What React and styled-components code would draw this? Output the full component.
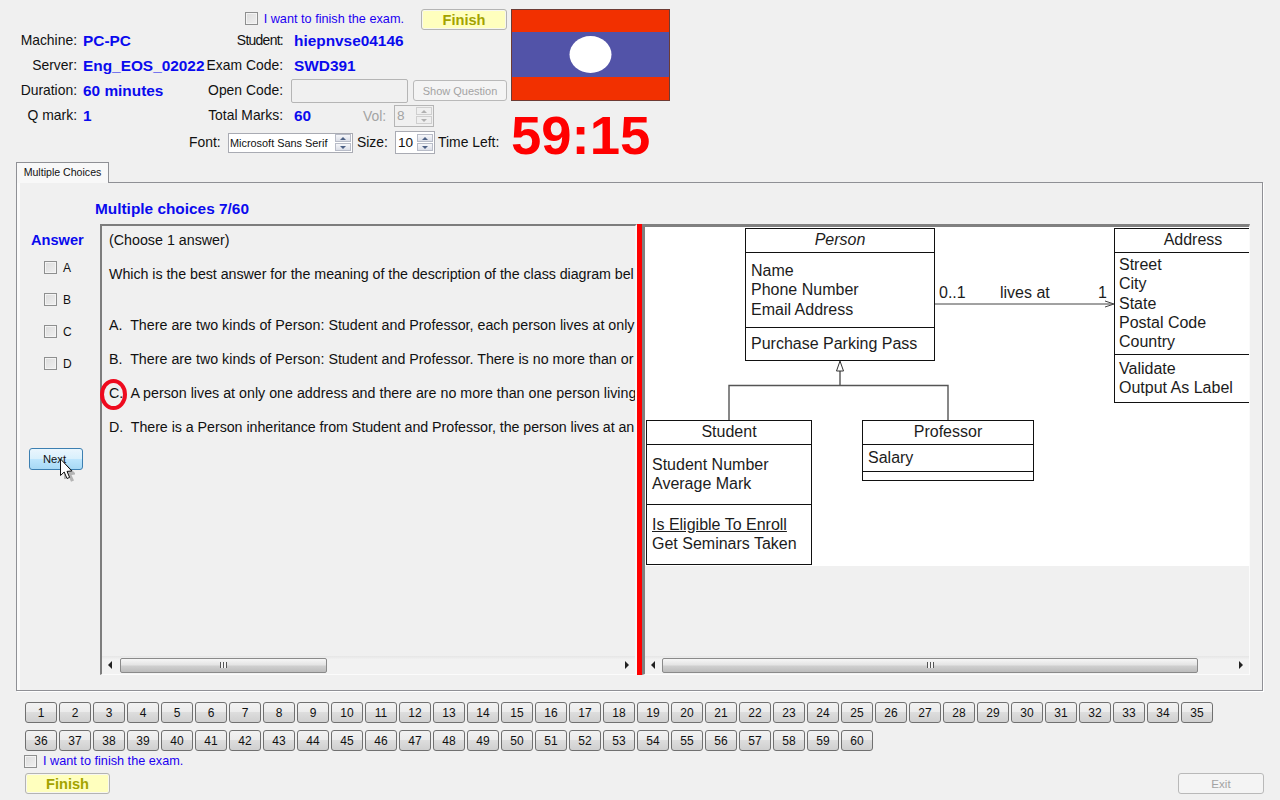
import styled, { createGlobalStyle } from "styled-components";

const GlobalStyle = createGlobalStyle`
    html, body {
        margin: 0;
        padding: 0;
        background: #f0f0f0;
    }
    body {
        font-family: "Liberation Sans", Arial, sans-serif;
        color: #111;
    }
`;

const row1 = Array.from({ length: 35 }, (_, i) => i + 1);
const row2 = Array.from({ length: 25 }, (_, i) => i + 36);

const answers = ["A", "B", "C", "D"];

export default function App() {
    return (
        <Page>
            <GlobalStyle />
            <Header>
                <InfoGrid>
                    <FinishRow>
                        <CheckLine>
                            <Check type="checkbox" />
                            <BlueLabel>I want to finish the exam.</BlueLabel>
                        </CheckLine>
                        <FinishButton $w={86}>Finish</FinishButton>
                    </FinishRow>

                    <FieldLabel>Machine:</FieldLabel>
                    <Value>PC-PC</Value>
                    <FieldLabel $wide $tight>Student:</FieldLabel>
                    <Value $indent>hiepnvse04146</Value>

                    <FieldLabel>Server:</FieldLabel>
                    <Value>Eng_EOS_02022</Value>
                    <FieldLabel $wide>Exam Code:</FieldLabel>
                    <Value $indent>SWD391</Value>

                    <FieldLabel>Duration:</FieldLabel>
                    <Value>60 minutes</Value>
                    <FieldLabel $wide>Open Code:</FieldLabel>
                    <Cell>
                        <CodeInput disabled />
                        <ShowButton>Show Question</ShowButton>
                    </Cell>

                    <FieldLabel>Q mark:</FieldLabel>
                    <Value>1</Value>
                    <FieldLabel $wide>Total Marks:</FieldLabel>
                    <Cell>
                        <MarksValue>60</MarksValue>
                        <VolLabel>Vol:</VolLabel>
                        <Spin $w={40} $h={22} $disabled>
                            <SpinText>8</SpinText>
                            <SpinArrows $disabled />
                        </Spin>
                    </Cell>

                    <FontRow>
                        <RowLabel $w={39}>Font:</RowLabel>
                        <Spin $w={125} $h={20}>
                            <FontName>Microsoft Sans Serif</FontName>
                            <SpinArrows />
                        </Spin>
                        <RowLabel $w={38} $ml={4}>Size:</RowLabel>
                        <Spin $w={40} $h={23}>
                            <SpinText>10</SpinText>
                            <SpinArrows />
                        </Spin>
                        <RowLabel $ml={3}>Time Left:</RowLabel>
                    </FontRow>
                </InfoGrid>

                <FlagColumn>
                    <Flag viewBox="0 0 159 92">
                        <rect width="159" height="92" fill="#f23000" />
                        <rect y="23" width="159" height="45" fill="#5253a8" />
                        <ellipse cx="79.5" cy="45.5" rx="21" ry="18.5" fill="#fff" />
                        <rect x=".5" y=".5" width="158" height="91" fill="none" stroke="#6d3b34" />
                    </Flag>
                    <Timer>59:15</Timer>
                </FlagColumn>
            </Header>

            <TabStrip>
                <Tab>Multiple Choices</Tab>
            </TabStrip>

            <TabPanel>
                <PanelTitle>Multiple choices 7/60</PanelTitle>
                <Workspace>
                    <Sidebar>
                        <AnswerTitle>Answer</AnswerTitle>
                        <AnswerList>
                            {answers.map((a) => (
                                <AnswerRow key={a}>
                                    <Check type="checkbox" />
                                    <AnswerLetter>{a}</AnswerLetter>
                                </AnswerRow>
                            ))}
                        </AnswerList>
                        <NextButton>
                            Next
                            <Cursor viewBox="0 0 18 24">
                                <path d="M3.5 3 L14.5 14 L14.5 15.5 L11 16 L13.5 21.5 L10.5 22.8 L8 17 L5 20 L3.5 20 Z" fill="#000" opacity=".25" transform="translate(1.5 1)" />
                                <path d="M1.5 1 L1.5 17.5 L5.2 14 L8 20.5 L10.6 19.4 L8 13.4 L12.8 13 Z" fill="#fff" stroke="#111" strokeWidth="1" strokeLinejoin="round" />
                            </Cursor>
                        </NextButton>
                    </Sidebar>

                    <QuestionPane>
                        <QuestionText>
                            <Line>(Choose 1 answer)</Line>
                            <Line $fit>Which is the best answer for the meaning of the description of the class diagram bel</Line>
                            <OptionList>
                                <Line>{"A.  There are two kinds of Person: Student and Professor, each person lives at only"}</Line>
                                <Line>{"B.  There are two kinds of Person: Student and Professor. There is no more than or"}</Line>
                                <Line>{"C.  A person lives at only one address and there are no more than one person living"}</Line>
                                <Line $fit>{"D.  There is a Person inheritance from Student and Professor, the person lives at an"}</Line>
                            </OptionList>
                        </QuestionText>
                        <AnswerMark />
                        <ScrollBar $thumbStart={1} $thumbWidth={207} />
                    </QuestionPane>

                    <Splitter />

                    <DiagramPane>
                        <DiagramViewport>
                            <Diagram>
                                <Connectors viewBox="0 0 604 339">
                                    <path d="M290 77 H468 M460 74 L469 77 L460 80" fill="none" stroke="#444" />
                                    <path d="M195 144 V158 M84 193 V158.5 H303 V193" fill="none" stroke="#555" strokeWidth="1.4" />
                                    <path d="M195 134 L191.5 144 H198.5 Z" fill="#fff" stroke="#333" />
                                </Connectors>

                                <AssocLabel $x={294}>0..1</AssocLabel>
                                <AssocLabel $x={355}>lives at</AssocLabel>
                                <AssocLabel $x={453}>1</AssocLabel>

                                <UmlBox $x={100} $y={1} $w={190}>
                                    <UmlTitle $italic>Person</UmlTitle>
                                    <UmlSection $h={75} $pt={8}>
                                        <div>Name</div>
                                        <div>Phone Number</div>
                                        <div>Email Address</div>
                                    </UmlSection>
                                    <UmlSection $h={32} $pt={6} $last>
                                        <div>Purchase Parking Pass</div>
                                    </UmlSection>
                                </UmlBox>

                                <UmlBox $x={469} $y={1} $w={190}>
                                    <UmlTitle $offset={32}>Address</UmlTitle>
                                    <UmlSection $h={102} $pt={2} $pl={4}>
                                        <div>Street</div>
                                        <div>City</div>
                                        <div>State</div>
                                        <div>Postal Code</div>
                                        <div>Country</div>
                                    </UmlSection>
                                    <UmlSection $h={47} $pt={4} $pl={4} $last>
                                        <div>Validate</div>
                                        <div>Output As Label</div>
                                    </UmlSection>
                                </UmlBox>

                                <UmlBox $x={1} $y={193} $w={166}>
                                    <UmlTitle>Student</UmlTitle>
                                    <UmlSection $h={60} $pt={10}>
                                        <div>Student Number</div>
                                        <div>Average Mark</div>
                                    </UmlSection>
                                    <UmlSection $h={59} $pt={10} $last>
                                        <u>Is Eligible To Enroll</u>
                                        <div>Get Seminars Taken</div>
                                    </UmlSection>
                                </UmlBox>

                                <UmlBox $x={217} $y={193} $w={172}>
                                    <UmlTitle>Professor</UmlTitle>
                                    <UmlSection $h={27} $pt={3}>
                                        <div>Salary</div>
                                    </UmlSection>
                                    <UmlSection $h={8} $last />
                                </UmlBox>
                            </Diagram>
                        </DiagramViewport>
                        <ScrollBar $thumbStart={0} $thumbWidth={536} />
                    </DiagramPane>
                </Workspace>
            </TabPanel>

            <Footer>
                <NumberGrid>
                    {row1.concat(row2).map((n) => (
                        <NumberButton key={n}>{n}</NumberButton>
                    ))}
                </NumberGrid>
                <FooterCheck>
                    <Check type="checkbox" />
                    <BlueLabel>I want to finish the exam.</BlueLabel>
                </FooterCheck>
                <FooterActions>
                    <FinishButton $w={85}>Finish</FinishButton>
                    <ExitButton>Exit</ExitButton>
                </FooterActions>
            </Footer>
        </Page>
    );
}

function ScrollBar({ $thumbStart, $thumbWidth }) {
    return (
        <ScrollTrack>
            <ScrollArrow />
            <ThumbArea>
                <Thumb $start={$thumbStart} $width={$thumbWidth}>
                    <Gripper />
                </Thumb>
            </ThumbArea>
            <ScrollArrow $right />
        </ScrollTrack>
    );
}

function SpinArrows({ $disabled }) {
    return (
        <SpinColumn>
            <SpinButton $disabled={$disabled}><SpinTriangle $disabled={$disabled} /></SpinButton>
            <SpinButton $disabled={$disabled}><SpinTriangle $down $disabled={$disabled} /></SpinButton>
        </SpinColumn>
    );
}

const Page = styled.div`
    width: 1280px;
    height: 800px;
    overflow: hidden;
    background: #f0f0f0;
`;

const Header = styled.header`
    display: flex;
    gap: 4px;
    height: 162px;
    padding-top: 9px;
    box-sizing: border-box;
`;

const InfoGrid = styled.div`
    display: grid;
    grid-template-columns: 83px 124px 84px 216px;
    grid-template-rows: 19px repeat(4, 25px) 29px;
    width: 507px;
    font-size: 13.9px;
`;

const FinishRow = styled.div`
    grid-column: 1 / -1;
    display: flex;
    justify-content: flex-end;
    align-items: flex-start;
    gap: 17px;
`;

const CheckLine = styled.label`
    display: flex;
    align-items: center;
    gap: 6px;
    height: 19px;
`;

const Check = styled.input`
    appearance: none;
    width: 13px;
    height: 13px;
    margin: 0;
    box-sizing: border-box;
    flex: none;
    border: 1px solid #8e8f8f;
    background: linear-gradient(135deg, #dcdcdc, #f0f0f0);
    box-shadow: inset 0 0 0 1px #f4f4f4;
`;

const BlueLabel = styled.span`
    font-size: 12.7px;
    color: #1c00f0;
    white-space: nowrap;
`;

const FinishButton = styled.button`
    width: ${(p) => p.$w}px;
    height: 21px;
    padding: 0;
    box-sizing: border-box;
    border: 1px solid #b4b4b4;
    border-radius: 3px;
    background: #ffffbe;
    box-shadow: inset 0 0 0 1px #f7f7f0;
    font-family: inherit;
    font-size: 14.6px;
    font-weight: 700;
    color: #a3a300;
`;

const FieldLabel = styled.div`
    display: flex;
    align-items: center;
    justify-content: flex-end;
    padding-right: ${(p) => (p.$wide ? 8 : 6)}px;
    padding-bottom: 1px;
    letter-spacing: ${(p) => (p.$tight ? "-0.7px" : "normal")};
    white-space: nowrap;
`;

const Value = styled.div`
    display: flex;
    align-items: center;
    padding-left: ${(p) => (p.$indent ? 3 : 0)}px;
    font-size: 15.4px;
    font-weight: 700;
    color: #0a0aee;
    white-space: nowrap;
`;

const Cell = styled.div`
    display: flex;
    align-items: center;
`;

const CodeInput = styled.input`
    width: 117px;
    height: 24px;
    box-sizing: border-box;
    border: 1px solid #b5b5b5;
    border-radius: 2px;
    background: #f0f0f0;
    margin: 0 5px 0 0;
`;

const DisabledButton = styled.button`
    box-sizing: border-box;
    padding: 0;
    border: 1px solid #b9b9b9;
    border-radius: 3px;
    background: #f4f4f4;
    font-family: inherit;
    color: #a3a3a3;
`;

const ShowButton = styled(DisabledButton)`
    width: 94px;
    height: 21px;
    font-size: 11px;
`;

const ExitButton = styled(DisabledButton)`
    width: 86px;
    height: 21px;
    font-size: 11.6px;
`;

const MarksValue = styled.span`
    width: 72px;
    padding-left: 3px;
    box-sizing: border-box;
    font-size: 15.4px;
    font-weight: 700;
    color: #0a0aee;
`;

const VolLabel = styled.span`
    width: 31px;
    color: #a3a3a3;
`;

const FontRow = styled.div`
    grid-column: 1 / -1;
    display: flex;
    align-items: center;
    padding-left: 189px;
`;

const RowLabel = styled.span`
    width: ${(p) => (p.$w ? `${p.$w}px` : "auto")};
    flex: none;
    margin-left: ${(p) => p.$ml || 0}px;
    margin-bottom: 2px;
    white-space: nowrap;
`;

const Spin = styled.div`
    display: flex;
    align-items: center;
    justify-content: space-between;
    width: ${(p) => p.$w}px;
    height: ${(p) => p.$h}px;
    box-sizing: border-box;
    flex: none;
    padding: 0 1px 0 1px;
    border: 1px solid ${(p) => (p.$disabled ? "#b5b5b5" : "#a9abb3")};
    background: ${(p) => (p.$disabled ? "#f0f0f0" : "#fff")};
    color: ${(p) => (p.$disabled ? "#a3a3a3" : "#111")};
`;

const SpinText = styled.span`
    font-size: 13.6px;
    padding-left: 1px;
`;

const FontName = styled.span`
    font-size: 10.9px;
    white-space: nowrap;
`;

const SpinColumn = styled.div`
    display: flex;
    flex-direction: column;
    gap: 1px;
`;

const SpinButton = styled.div`
    display: flex;
    align-items: center;
    justify-content: center;
    width: 14px;
    height: 6px;
    border: 1px solid ${(p) => (p.$disabled ? "#cfcfcf" : "#b8bcc8")};
    background: ${(p) => (p.$disabled ? "#efefef" : "linear-gradient(#f6f7fa, #dcdfe8)")};
`;

const SpinTriangle = styled.span`
    width: 0;
    height: 0;
    border-left: 3px solid transparent;
    border-right: 3px solid transparent;
    ${(p) => {
        const color = p.$disabled ? "#b0b0b0" : "#4d6185";
        return p.$down ? `border-top: 3px solid ${color};` : `border-bottom: 3px solid ${color};`;
    }}
`;

const FlagColumn = styled.div`
    display: flex;
    flex-direction: column;
    width: 159px;
`;

const Flag = styled.svg`
    display: block;
    flex: none;
    width: 159px;
    height: 92px;
`;

const Timer = styled.div`
    font-size: 54.5px;
    line-height: 50px;
    margin-top: 10px;
    font-weight: 700;
    color: #ff0000;
    white-space: nowrap;
`;

const TabStrip = styled.div`
    display: flex;
    height: 20px;
    padding-left: 16px;
`;

const Tab = styled.div`
    position: relative;
    z-index: 1;
    width: 93px;
    height: 21px;
    box-sizing: border-box;
    border: 1px solid #8f9095;
    border-bottom: none;
    background: #f8f8f8;
    font-size: 10.6px;
    line-height: 19px;
    text-align: center;
    white-space: nowrap;
`;

const TabPanel = styled.section`
    width: 1247px;
    height: 509px;
    margin-left: 16px;
    box-sizing: border-box;
    border: 1px solid #8f9095;
    background: #f0f0f0;
    padding-top: 17px;
    box-shadow: inset 3px 0 0 #fbfbfb, 1px 1px 0 #fff;
`;

const PanelTitle = styled.h2`
    margin: 0 0 6px 78px;
    font-size: 15.4px;
    line-height: 18px;
    font-weight: 700;
    color: #0a0aee;
`;

const Workspace = styled.div`
    display: flex;
    height: 451px;
`;

const Sidebar = styled.aside`
    display: flex;
    flex-direction: column;
    width: 83px;
    flex: none;
    padding-top: 7px;
    box-sizing: border-box;
`;

const AnswerTitle = styled.div`
    margin-left: 14px;
    font-size: 14.6px;
    line-height: 18px;
    font-weight: 700;
    color: #0a0aee;
`;

const AnswerList = styled.div`
    display: flex;
    flex-direction: column;
    gap: 19px;
    margin: 12px 0 0 27px;
`;

const AnswerRow = styled.label`
    display: flex;
    align-items: center;
    gap: 6px;
    height: 13px;
`;

const AnswerLetter = styled.span`
    font-size: 12px;
`;

const NextButton = styled.button`
    position: relative;
    width: 54px;
    height: 22px;
    margin: 78px 0 0 12px;
    padding: 0 3px 0 0;
    box-sizing: border-box;
    border: 1px solid #3c7fb1;
    border-radius: 3px;
    background: linear-gradient(#eaf6fd 0%, #d9f0fc 48%, #bee6fd 50%, #a7d9f5 100%);
    font-family: inherit;
    font-size: 11.2px;
    color: #111;
`;

const Cursor = styled.svg`
    position: absolute;
    left: 29px;
    top: 9px;
    width: 18px;
    height: 24px;
`;

const QuestionPane = styled.div`
    position: relative;
    display: flex;
    flex-direction: column;
    width: 537px;
    flex: none;
    box-sizing: border-box;
    border-top: 2px solid #7d7d7d;
    border-left: 2px solid #7d7d7d;
    border-right: 2px solid #f8f8f8;
    border-bottom: 1px solid #fbfbfb;
`;

const QuestionText = styled.div`
    flex: 1;
    overflow: hidden;
    padding: 6px 0 0 7px;
    font-size: 14.28px;
    line-height: 17px;
    white-space: pre;
`;

const Line = styled.div`
    height: 17px;
    margin-bottom: 17px;
    letter-spacing: ${(p) => (p.$fit ? "-0.05px" : "normal")};
`;

const OptionList = styled.div`
    margin-top: 34px;
`;

const AnswerMark = styled.div`
    position: absolute;
    left: -2px;
    top: 153px;
    width: 27px;
    height: 31px;
    box-sizing: border-box;
    border: 4px solid #ee0a1e;
    border-radius: 50%;
`;

const Splitter = styled.div`
    width: 5px;
    flex: none;
    background: #ff0000;
`;

const DiagramPane = styled.div`
    display: flex;
    flex-direction: column;
    width: 608px;
    flex: none;
    box-sizing: border-box;
    border-top: 3px solid #808080;
    border-left: 3px solid #808080;
    border-right: 1px solid #fbfbfb;
    border-bottom: 1px solid #fbfbfb;
`;

const DiagramViewport = styled.div`
    flex: 1;
    overflow: hidden;
`;

const Diagram = styled.div`
    position: relative;
    height: 339px;
    overflow: hidden;
    background: #fff;
    font-size: 16px;
    line-height: 19.3px;
    color: #1c1c1c;
`;

const Connectors = styled.svg`
    position: absolute;
    left: 0;
    top: 0;
    width: 604px;
    height: 339px;
`;

const AssocLabel = styled.span`
    position: absolute;
    left: ${(p) => p.$x}px;
    top: 56px;
`;

const UmlBox = styled.div`
    position: absolute;
    left: ${(p) => p.$x}px;
    top: ${(p) => p.$y}px;
    width: ${(p) => p.$w}px;
    box-sizing: border-box;
    border: 1px solid #111;
    background: #fff;
`;

const UmlTitle = styled.div`
    height: 24px;
    box-sizing: border-box;
    border-bottom: 1px solid #111;
    line-height: 22px;
    text-align: center;
    font-style: ${(p) => (p.$italic ? "italic" : "normal")};
    padding-right: ${(p) => p.$offset || 0}px;
`;

const UmlSection = styled.div`
    height: ${(p) => p.$h}px;
    box-sizing: border-box;
    padding: ${(p) => p.$pt || 0}px 0 0 ${(p) => p.$pl || 5}px;
    border-bottom: ${(p) => (p.$last ? "none" : "1px solid #111")};
    white-space: nowrap;
    u {
        display: block;
    }
`;

const ScrollTrack = styled.div`
    display: flex;
    align-items: center;
    height: 18px;
    flex: none;
    background: linear-gradient(#e6e6e6, #f2f2f2 20%, #f2f2f2);
`;

const ScrollArrow = styled.div`
    position: relative;
    width: 17px;
    height: 18px;
    flex: none;
    &::after {
        content: "";
        position: absolute;
        top: 5px;
        left: ${(p) => (p.$right ? 7 : 6)}px;
        border-top: 4px solid transparent;
        border-bottom: 4px solid transparent;
        ${(p) => (p.$right ? "border-left: 4px solid #222;" : "border-right: 4px solid #222;")}
    }
`;

const ThumbArea = styled.div`
    flex: 1;
    display: flex;
    align-items: center;
`;

const Thumb = styled.div`
    display: flex;
    align-items: center;
    justify-content: center;
    width: ${(p) => p.$width}px;
    height: 15px;
    margin-left: ${(p) => p.$start}px;
    box-sizing: border-box;
    border: 1px solid #8a8a8a;
    border-radius: 2px;
    background: linear-gradient(#f6f6f6, #e4e4e4 45%, #cfcfcf 55%, #bcbcbc);
`;

const Gripper = styled.div`
    width: 7px;
    height: 6px;
    background: repeating-linear-gradient(90deg, #555 0 1px, #f4f4f4 1px 3px);
`;

const Footer = styled.footer`
    padding: 11px 16px 0 25px;
`;

const NumberGrid = styled.div`
    display: grid;
    grid-template-columns: repeat(35, 32px);
    grid-auto-rows: 21px;
    column-gap: 2px;
    row-gap: 7px;
`;

const NumberButton = styled.button`
    padding: 0;
    box-sizing: border-box;
    border: 1px solid #707070;
    border-radius: 3px;
    background: linear-gradient(#f2f2f2 0%, #ebebeb 48%, #dddddd 50%, #cfcfcf 100%);
    font-family: inherit;
    font-size: 12px;
    color: #111;
`;

const FooterCheck = styled.label`
    display: flex;
    align-items: center;
    gap: 6px;
    height: 16px;
    margin: 2px 0 0 -1px;
`;

const FooterActions = styled.div`
    display: flex;
    justify-content: space-between;
    margin-top: 4px;
`;
